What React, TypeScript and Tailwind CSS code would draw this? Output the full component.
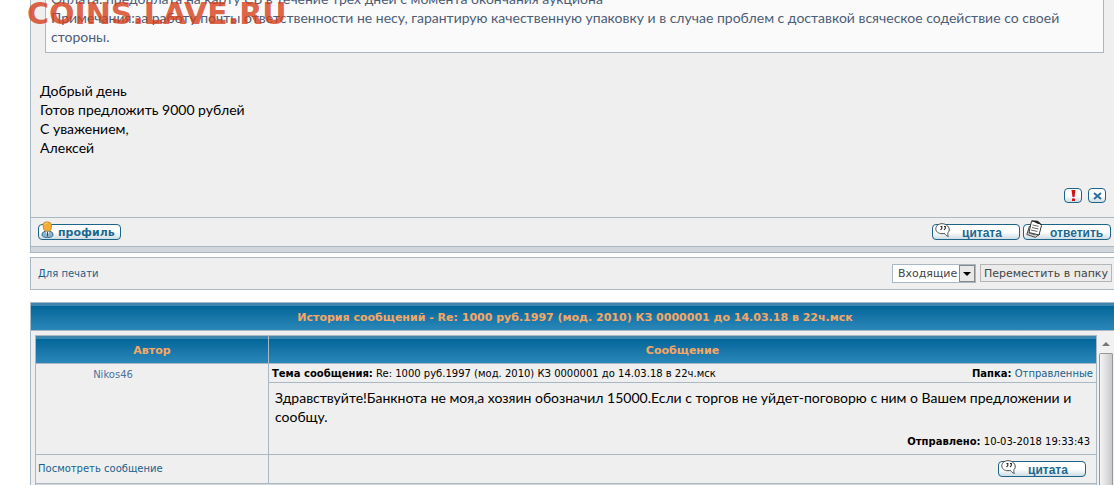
import React from "react";
import clsx from "clsx";

type ImageButtonProps = {
  label: string;
  icon: React.ReactNode;
  className?: string;
};

const smallText = "font-['DejaVu_Sans',Verdana,sans-serif] text-[10px] leading-[14px]";
const postText = "font-[Lato,'Trebuchet_MS',sans-serif] text-[14px] leading-[19px]";
const linkClass = "text-[#1b5f8c] hover:underline";
const headClass =
  "border-t-3 border-[#3f86ae] bg-linear-to-b from-[#006699] to-[#2a87b9] text-center font-['DejaVu_Sans',Verdana,sans-serif] text-[11px] leading-[14px] font-bold text-[#f5a866]";
const faceClass =
  "border border-[#1c6488] bg-linear-to-b from-white from-50% to-[#cfdde4]";

const BubbleIcon = () => (
  <svg width="16" height="15" viewBox="0 0 16 15" fill="none">
    <path
      d="M7 .7C3.300.7.8 2.900.8 5.800S3.300 10.700 7 10.700c.9 0 1.700-.1 2.400-.4 1 1.600 2.300 2.800 4 3.100-.7-1.200-.8-2.500-.4-3.800 1-.9 1.400-2.200 1.200-3.600C13.800 2.900 10.500.7 7 .7z"
      fill="#fff"
      stroke="#4a4a4a"
    />
    <path d="M5.500 3.500h1.300v2L5.500 7M9 3.500h1.300v2L9 7" stroke="#222" strokeWidth="1.100" />
  </svg>
);

const PagesIcon = () => (
  <svg width="17" height="18" viewBox="0 0 17 18" fill="none">
    <path d="M3.500 6L.8 14.500l8.500 2.800L14 14" fill="#ddd" stroke="#444" />
    <path d="M5.500 1.200l7 .8 3 3.500-2.500 9.500-10-2.500z" fill="#fff" stroke="#333" />
    <path d="M5 .3l6.500.5 4.500 4-4.500-1z" fill="#222" />
    <path d="M6.500 5l6 1.300M6 7.500l6.500 1.500M5 10l6.500 1.500M2.500 13l7 2" stroke="#666" />
  </svg>
);

const PersonIcon = () => (
  <svg width="13" height="17" viewBox="0 0 13 17" fill="none">
    <path d="M1 14c0-3 2-4 5.500-4s5.500 1 5.500 4c0 1.500-2 2.500-5.500 2.500S1 15.500 1 14z" fill="#8db4cb" stroke="#35698a" />
    <path d="M4.500 10.500l2 3.500 2-3.500z" fill="#fff" />
    <path d="M6.500 10.500v5" stroke="#1c5578" />
    <path d="M2 4C2 1.800 3.500 1 6 1s4.500 1 4.500 3c0 1.500-.3 3-.6 4.500-.4 2.300-6.400 2.300-7 0C2.500 7 2 5.500 2 4z" fill="#f3ad35" stroke="#c58a2c" />
    <path d="M4 3.500C4.500 2.500 5.500 2 6.500 2" stroke="#ffdc91" />
  </svg>
);

const ImageButton = ({ label, icon, className }: ImageButtonProps) => (
  <button
    type="button"
    className={clsx(
      "relative block h-[16px] rounded-[4px] pt-[2px] text-left leading-[12px] font-bold whitespace-nowrap text-[#1c6990]",
      faceClass,
      className,
    )}
  >
    <span className="absolute bottom-[1px] left-[2px]">{icon}</span>
    {label}
  </button>
);

const QuoteButton = () => (
  <ImageButton
    label="цитата"
    icon={<BubbleIcon />}
    className="w-[88px] pl-[29px] font-['Liberation_Sans',Arial,sans-serif] text-[12px]"
  />
);

const Message = () => (
  <section className="border-b border-l border-[#a9b8c2] bg-[#efefef]">
    <div className="pr-[10px] pl-[14px]">
      <blockquote
        className={clsx(
          "overflow-hidden border border-t-0 border-[#a9b8c2] bg-[#fafafa] px-[5px] pb-[6px] text-[#4c5d77]",
          postText,
        )}
      >
        <p className="-mt-[11px]">
          Оплата: предоплата на карту СБ в течение трех дней с момента окончания аукциона
        </p>
        <p>
          Примечания:за работу почты ответственности не несу, гарантирую качественную упаковку и в
          случае проблем с доставкой всяческое содействие со своей стороны.
        </p>
      </blockquote>
    </div>
    <div className={clsx("px-[9px] pt-[28px] text-black", postText)}>
      <p>Добрый день</p>
      <p>Готов предложить 9000 рублей</p>
      <p>С уважением,</p>
      <p>Алексей</p>
    </div>
    <div className="flex justify-end gap-[6px] pt-[31px] pr-[8px] pb-[14px]">
      <button
        type="button"
        aria-label="Пожаловаться"
        className={clsx("flex h-[15px] w-[18px] items-center justify-center rounded-[4px]", faceClass)}
      >
        <svg width="5" height="11" viewBox="0 0 5 11">
          <path d="M.5 0h4L3.500 7h-2zM1 8.500h3V11H1z" fill="#d01515" />
        </svg>
      </button>
      <button
        type="button"
        aria-label="Удалить"
        className={clsx("flex h-[15px] w-[18px] items-center justify-center rounded-[4px]", faceClass)}
      >
        <svg width="9" height="8" viewBox="0 0 9 8">
          <path d="M1 1l7 6M8 1L1 7" stroke="#2b7096" strokeWidth="2" />
        </svg>
      </button>
    </div>
    <div className="flex h-[29px] items-center justify-between border-t border-[#a9b8c2] pr-[3px] pl-[7px]">
      <ImageButton
        label="профиль"
        icon={<PersonIcon />}
        className="w-[83px] pl-[19px] font-['DejaVu_Sans',Verdana,sans-serif] text-[11px]"
      />
      <div className="flex gap-[3px]">
        <QuoteButton />
        <ImageButton
          label="ответить"
          icon={<PagesIcon />}
          className="w-[88px] pl-[26px] font-['Liberation_Sans',Arial,sans-serif] text-[12px]"
        />
      </div>
    </div>
    <div className="h-[6px] border-t border-[#a9b8c2] bg-[#d1d7dc]" />
  </section>
);

const FolderBar = () => (
  <section className="mt-[4px] flex h-[33px] items-center justify-between border-y border-l border-[#a9b8c2] bg-[#efefef] pr-[2px] pl-[7px]">
    <a href="#print" className={clsx(linkClass, smallText)}>
      Для печати
    </a>
    <form
      className="flex gap-[4px] font-['DejaVu_Sans',Verdana,sans-serif] text-[11px] leading-[15px] text-[#444]"
      onSubmit={(e) => e.preventDefault()}
    >
      <div className="relative">
        <select
          aria-label="Папка"
          className="h-[19px] w-[84px] appearance-none border border-[#a9b8c2] bg-white pl-[5px]"
        >
          <option>Входящие</option>
          <option>Отправленные</option>
        </select>
        <span className="pointer-events-none absolute top-[1px] right-[1px] flex h-[17px] w-[16px] items-center justify-center border border-[#888] bg-[#e8e8e8]">
          <svg width="8" height="4" viewBox="0 0 8 4">
            <path d="M0 0h8L4 4z" fill="#000" />
          </svg>
        </span>
      </div>
      <button
        type="submit"
        className="h-[18px] border border-[#b5b5b5] bg-[#ebebeb] px-[3px] whitespace-nowrap"
      >
        Переместить в папку
      </button>
    </form>
  </section>
);

const History = () => (
  <section className="mt-[12px] flex flex-1 flex-col border-t border-l border-[#a9b8c2] bg-[#efefef]">
    <h2 className={clsx("pt-[5px] pb-[5px] pl-[5px]", headClass)}>
      История сообщений - Re: 1000 руб.1997 (мод. 2010) КЗ 0000001 до 14.03.18 в 22ч.мск
    </h2>
    <div className="flex flex-1 border-t border-[#a9b8c2]">
      <div className="flex-1 pt-[4px] pl-[4px]">
        <table className={clsx("w-full border-collapse text-black", smallText)}>
          <thead>
            <tr>
              <th className="w-[233px] border border-[#a9b8c2] p-0">
                <div className={clsx("pt-[5px] pb-[5px]", headClass)}>Автор</div>
              </th>
              <th className="border border-[#a9b8c2] p-0">
                <div className={clsx("pt-[5px] pb-[5px]", headClass)}>Сообщение</div>
              </th>
            </tr>
          </thead>
          <tbody>
            <tr>
              <td className="border border-[#a9b8c2] pt-[4px] pr-[78px] text-center align-top">
                <a href="#user" className="text-[#4d729b] hover:underline">
                  Nikos46
                </a>
              </td>
              <td className="border border-[#a9b8c2] p-0 align-top">
                <div className="flex justify-between border-b border-[#a9b8c2] px-[3px] pt-[3px] pb-[1px]">
                  <span>
                    <b>Тема сообщения:</b> Re: 1000 руб.1997 (мод. 2010) КЗ 0000001 до 14.03.18 в 22ч.мск
                  </span>
                  <span>
                    <b>Папка:</b>{" "}
                    <a href="#sent" className={linkClass}>
                      Отправленные
                    </a>
                  </span>
                </div>
                <p className={clsx("px-[6px] pt-[5px]", postText)}>
                  Здравствуйте!Банкнота не моя,а хозяин обозначил 15000.Если с торгов не
                  уйдет-поговорю с ним о Вашем предложении и сообщу.
                </p>
                <p className="pt-[9px] pr-[6px] pb-[5px] text-right">
                  <b>Отправлено:</b> 10-03-2018 19:33:43
                </p>
              </td>
            </tr>
            <tr>
              <td className="border border-[#a9b8c2] py-0 pl-[2px]">
                <a href="#message" className={linkClass}>
                  Посмотреть сообщение
                </a>
              </td>
              <td className="h-[29px] border border-[#a9b8c2] py-0 pr-[10px]">
                <div className="flex justify-end">
                  <QuoteButton />
                </div>
              </td>
            </tr>
            <tr>
              <td colSpan={2} className="h-[3px] border-x border-[#a9b8c2] bg-[#d1d7dc] p-0" />
            </tr>
          </tbody>
        </table>
      </div>
      <div className="flex w-[17px] flex-col items-center bg-[#f1f1f1]">
        <svg className="mt-[10px]" width="8" height="5" viewBox="0 0 8 5">
          <path d="M0 5l4-4 4 4z" fill="#777" />
        </svg>
        <div className="mt-[7px] w-[14px] flex-1 rounded-t-[2px] border border-b-0 border-[#979797] bg-linear-to-r from-[#f5f5f5] to-[#c9c9cd]" />
      </div>
    </div>
  </section>
);

const App = () => (
  <main className="relative flex min-h-screen flex-col overflow-hidden bg-white pl-[30px]">
    <Message />
    <FolderBar />
    <History />
    <div className="pointer-events-none absolute top-0 left-[27px] font-['DejaVu_Sans',Verdana,sans-serif] text-[30px] leading-[27px] font-bold text-[#d6401c] opacity-80">
      COINS.LAVE.RU
    </div>
  </main>
);

export default App;
